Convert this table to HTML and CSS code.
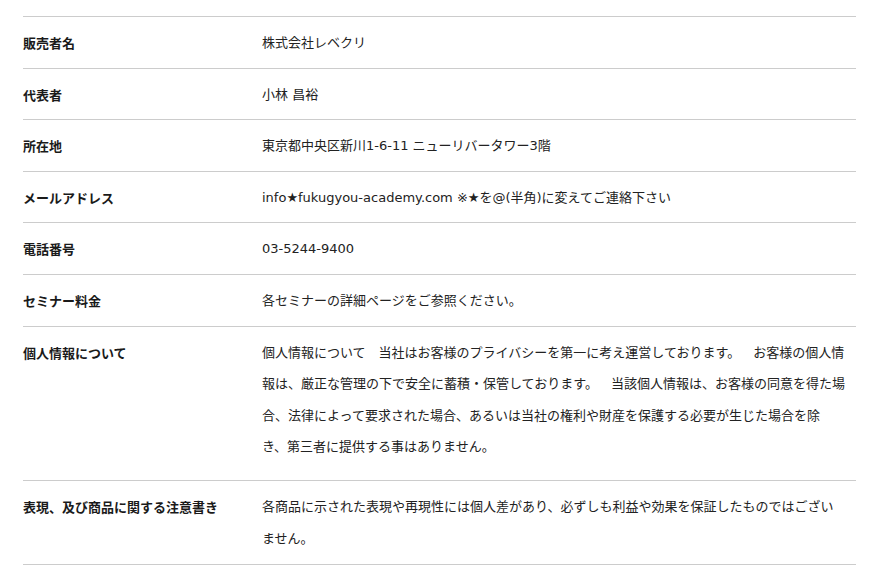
FILE: index.html
```html
<!DOCTYPE html>
<html lang="ja">
<head>
<meta charset="utf-8">
<title>特定商取引法に基づく表記</title>
<link rel="stylesheet" href="styles.css">
</head>
<body>
<div class="page">
  <dl class="info">
    <div class="row">
      <dt class="label">販売者名</dt>
      <dd class="value">株式会社レベクリ</dd>
    </div>
    <div class="row">
      <dt class="label">代表者</dt>
      <dd class="value">小林 昌裕</dd>
    </div>
    <div class="row">
      <dt class="label">所在地</dt>
      <dd class="value">東京都中央区新川1-6-11 ニューリバータワー3階</dd>
    </div>
    <div class="row">
      <dt class="label">メールアドレス</dt>
      <dd class="value">info★fukugyou-academy.com ※★を@(半角)に変えてご連絡下さい</dd>
    </div>
    <div class="row">
      <dt class="label">電話番号</dt>
      <dd class="value">03-5244-9400</dd>
    </div>
    <div class="row">
      <dt class="label">セミナー料金</dt>
      <dd class="value">各セミナーの詳細ページをご参照ください。</dd>
    </div>
    <div class="row row--long">
      <dt class="label">個人情報について</dt>
      <dd class="value">個人情報について　当社はお客様のプライバシーを第一に考え運営しております。　お客様の個人情<br>報は、厳正な管理の下で安全に蓄積・保管しております。　当該個人情報は、お客様の同意を得た場<br>合、法律によって要求された場合、あるいは当社の権利や財産を保護する必要が生じた場合を除<br>き、第三者に提供する事はありません。</dd>
    </div>
    <div class="row row--last">
      <dt class="label">表現、及び商品に関する注意書き</dt>
      <dd class="value">各商品に示された表現や再現性には個人差があり、必ずしも利益や効果を保証したものではござい<br>ません。</dd>
    </div>
  </dl>
</div>
</body>
</html>
```
FILE: styles.css
```css
html, body {
  margin: 0;
  padding: 0;
  background: #ffffff;
}

body {
  font-family: "DejaVu Sans", "Noto Sans CJK JP", sans-serif;
  font-size: 13px;
  color: #222222;
}

.page {
  padding: 16px 28px 0 23px;
}

.info {
  margin: 0;
  width: 833px;
  border-top: 1px solid #cccccc;
}

.row {
  display: flex;
  border-bottom: 1px solid #cccccc;
  padding: 10px 0 9px;
}

.row--long {
  padding-bottom: 17px;
}

.row--last {
  padding-bottom: 10px;
}

.label {
  flex: 0 0 239px;
  margin: 0;
  font-family: "Noto Sans CJK JP", sans-serif;
  font-weight: bold;
  line-height: 31.6px;
  color: #1a1a1a;
}

.value {
  flex: 1 1 auto;
  margin: 0;
  line-height: 31.6px;
  color: #222222;
  white-space: nowrap;
  text-spacing-trim: space-all;
}
```
